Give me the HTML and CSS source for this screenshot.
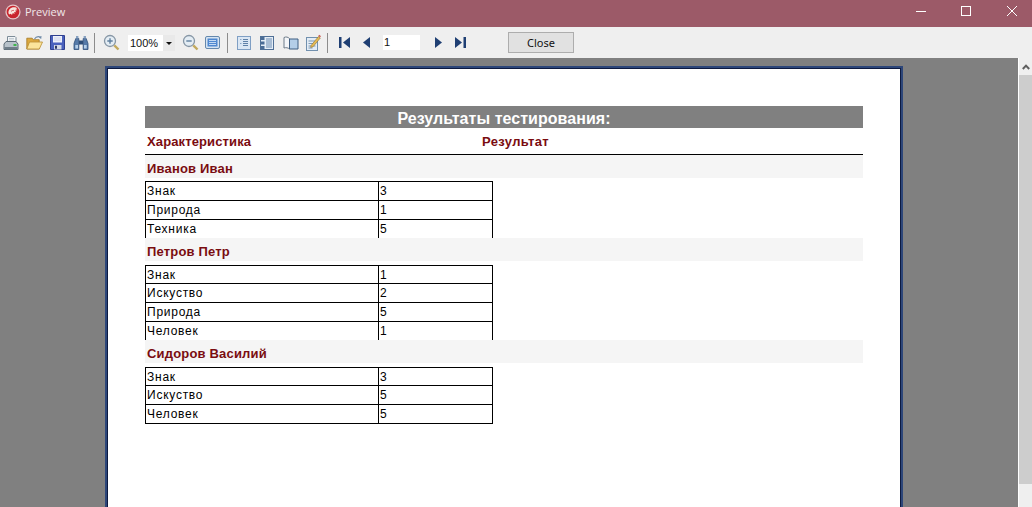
FILE: index.html
```html
<!DOCTYPE html>
<html lang="ru">
<head>
<meta charset="utf-8">
<title>Preview</title>
<link rel="stylesheet" href="styles.css">
</head>
<body>
<div class="window">
  <header class="titlebar">
    <svg class="app-icon" width="16" height="16" viewBox="0 0 16 16"><circle cx="8" cy="8" r="7.6" fill="#e6c4c6"/><circle cx="8" cy="8" r="6.3" fill="#c9232c"/><path d="M3.500 9.500C3 6 5.500 3.300 9 3.300c1.500 0 2.600.5 3.400 1.200l-2 .6 2.300 1-2.700.6 1.400 1.600-2.200-.2.400 2-1.800-1-.8 2-1.200-1.400-1.300.9z" fill="#f6e4dc"/><path d="M6 7.500c1-1 2-1.300 3-1" stroke="#c9232c" fill="none" stroke-width=".7"/></svg>
    <span class="app-title">Preview</span>
    <div class="win-controls">
      <svg class="win-btn win-min" width="10" height="10" viewBox="0 0 10 10"><path d="M0 5.500h10" stroke="#fff" fill="none"/></svg>
      <svg class="win-btn win-max" width="10" height="10" viewBox="0 0 10 10"><rect x=".5" y=".5" width="9" height="9" stroke="#fff" fill="none"/></svg>
      <svg class="win-btn" width="10" height="10" viewBox="0 0 10 10"><path d="M0 0l10 10M10 0L0 10" stroke="#fff" fill="none"/></svg>
    </div>
  </header>
  <nav class="toolbar">
    <svg class="tool" width="16" height="16" viewBox="0 0 16 16"><path d="M4.500 1.500h7.500l1 1V7H4.500z" fill="#f2f5f7" stroke="#7d8c98"/><path d="M6 3.500h5M6 5h5" stroke="#b9c4cc" stroke-width=".8"/><path d="M1 9l2-2.500h10L15 9v5.500H1z" fill="#b8c2ca" stroke="#5c6a75"/><path d="M1.500 12h13v2.500h-13z" fill="#6f7d88"/><path d="M10.500 9h3v2h-3z" fill="#3fb54c"/></svg>
    <svg class="tool g7" width="17" height="16" viewBox="0 0 17 16"><path d="M.8 5V3.200h5.400l1 1.500h6V14H.8z" fill="#dca93f" stroke="#a4771f" stroke-width=".8"/><path d="M.8 14l2.700-7h13l-3.200 7z" fill="#fbe59b" stroke="#b98e33" stroke-width=".8"/><path d="M8.500 4c1.300-2.300 3.600-2.800 6-2l-.8.800" fill="none" stroke="#6e8aa8" stroke-width="1.100"/><path d="M15.500 1l-.3 3-2.200-1.500z" fill="#6e8aa8"/></svg>
    <svg class="tool g7" width="15" height="15" viewBox="0 0 15 15"><path d="M.5.500h14v14H.5z" fill="#4a61bd" stroke="#2f3f8f"/><path d="M3 1h9v6.500H3z" fill="#eef1fa"/><path d="M4 3h7M4 5h7" stroke="#c4cce6" stroke-width=".8"/><path d="M4 10h7.500v4.500H4z" fill="#d5dae6"/><path d="M5 10.800h2v3H5z" fill="#2b3768"/></svg>
    <svg class="tool g8" width="16" height="16" viewBox="0 0 16 16"><path d="M1 14.500V8.500l1.800-5h3v11zM15 14.500V8.500l-1.800-5h-3v11z" fill="#567aa8" stroke="#2f4e78" stroke-width=".8"/><path d="M6 5.500h4v4H6z" fill="#2f4e78"/><path d="M2.300 10h2.700v3.500H2.300zM11 10h2.700v3.500H11z" fill="#b7d0ea"/><path d="M3 1h2.400v2.500H3zM10.600 1H13v2.500h-2.400z" fill="#86a0c0"/></svg>
    <span class="sep g5"></span>
    <svg class="tool g8" width="17" height="17" viewBox="0 0 17 17"><circle cx="7" cy="7" r="5.500" fill="#e4edf4" stroke="#8696a5" stroke-width="1.300"/><path d="M4.300 7h5.400M7 4.300v5.400" stroke="#5f7f9e" stroke-width="1.400"/><path d="M11.300 11.300l4.200 4.200" stroke="#c2a95d" stroke-width="2.400"/></svg>
    <div class="zoom-select g8"><span class="zoom-value">100%</span><span class="zoom-arrow"></span></div>
    <svg class="tool g7" width="17" height="17" viewBox="0 0 17 17"><circle cx="7" cy="7" r="5.500" fill="#e4edf4" stroke="#8696a5" stroke-width="1.300"/><path d="M4.300 7h5.400" stroke="#5f7f9e" stroke-width="1.400"/><path d="M11.300 11.300l4.200 4.200" stroke="#c2a95d" stroke-width="2.400"/></svg>
    <svg class="tool g6" width="15" height="13" viewBox="0 0 15 13"><rect x=".5" y=".5" width="14" height="12" rx="1.500" fill="#d6e4f2" stroke="#6488ad"/><rect x="2.500" y="2.500" width="10" height="8" fill="#4f88d0"/><path d="M4 4.500h7M4 6.500h7M4 8.500h7" stroke="#c3daf3"/></svg>
    <span class="sep g7"></span>
    <svg class="tool g9" width="14" height="14" viewBox="0 0 14 14"><rect x=".5" y=".5" width="13" height="13" fill="#dbe7f4" stroke="#7f9fc4"/><path d="M6 3.500h5M6 5.500h5M6 7.500h5M6 9.500h5" stroke="#5f81a8"/><path d="M3 3.500h1.500M3 7.500h1.500" stroke="#8aa6c6"/></svg>
    <svg class="tool g9" width="14" height="14" viewBox="0 0 14 14"><rect x=".5" y=".5" width="13" height="13" fill="#e4edf6" stroke="#4f6f96"/><path d="M1 1h3.500v3H1zM1 5.500h3.500v3H1zM1 10h3.500v3H1z" fill="#4a6c96"/><path d="M6 3h6M6 5h6M6 7h6M6 9h6M6 11h6" stroke="#6c8cb2"/></svg>
    <svg class="tool g9" width="16" height="14" viewBox="0 0 16 14"><path d="M1 1.500C3 .5 5 1 6.500 2.500V13c-1.500-1.300-3.500-1.700-5.500-1z" fill="#f3f5f8" stroke="#6c7a88"/><path d="M6.500 3h8.500v10H6.500z" fill="#b4cee8" stroke="#3f5f82"/></svg>
    <svg class="tool g7" width="15" height="17" viewBox="0 0 15 17"><rect x=".5" y="3.500" width="11" height="13" fill="#e3ecf5" stroke="#7190ae"/><path d="M2.500 7h7M2.500 9.500h7M2.500 12h7M2.500 14h4" stroke="#7190ae" stroke-width=".9"/><path d="M5 11.500L12.500 2.500l1.800 1.500L7 12.800l-2.300.6z" fill="#e6bb52" stroke="#8f7030" stroke-width=".6"/><path d="M12.800 1.300l1.700 1.500" stroke="#c95550" stroke-width="1.500"/></svg>
    <span class="sep g6"></span>
    <svg class="tool g11" width="11" height="11" viewBox="0 0 11 11"><path d="M0 0h2.500v11H0zM11 0v11L4 5.500z" fill="#1f3f73"/></svg>
    <svg class="tool g13" width="7" height="11" viewBox="0 0 7 11"><path d="M7 0v11L0 5.500z" fill="#1f3f73"/></svg>
    <span class="page-input g13">1</span>
    <svg class="tool g15" width="7" height="11" viewBox="0 0 7 11"><path d="M0 0v11l7-5.500z" fill="#1f3f73"/></svg>
    <svg class="tool g13" width="11" height="11" viewBox="0 0 11 11"><path d="M0 0v11l7-5.500zM8.500 0H11v11H8.500z" fill="#1f3f73"/></svg>
    <button class="close-btn" type="button">Close</button>
  </nav>
  <div class="workspace">
    <main class="viewport">
      <section class="sheet">
        <h1 class="report-title">Результаты тестирования:</h1>
        <div class="columns"><span class="col-name">Характеристика</span><span class="col-result">Результат</span></div>

        <h2 class="person">Иванов Иван</h2>
        <div class="grid first-grid">
          <div class="row"><span class="c1">Знак</span><span class="c2">3</span></div>
          <div class="row"><span class="c1">Природа</span><span class="c2">1</span></div>
          <div class="row"><span class="c1">Техника</span><span class="c2">5</span></div>
        </div>

        <h2 class="person">Петров Петр</h2>
        <div class="grid second-grid">
          <div class="row"><span class="c1">Знак</span><span class="c2">1</span></div>
          <div class="row"><span class="c1">Искуство</span><span class="c2">2</span></div>
          <div class="row"><span class="c1">Природа</span><span class="c2">5</span></div>
          <div class="row"><span class="c1">Человек</span><span class="c2">1</span></div>
        </div>

        <h2 class="person">Сидоров Василий</h2>
        <div class="grid third-grid">
          <div class="row"><span class="c1">Знак</span><span class="c2">3</span></div>
          <div class="row"><span class="c1">Искуство</span><span class="c2">5</span></div>
          <div class="row"><span class="c1">Человек</span><span class="c2">5</span></div>
        </div>
      </section>
    </main>
    <aside class="scrollbar">
      <span class="scroll-up"><svg width="8" height="6" viewBox="0 0 8 6"><path d="M.8 5L4 1.600 7.200 5" fill="none" stroke="#5f5f5f" stroke-width="2"/></svg></span>
      <span class="scroll-thumb"></span>
    </aside>
  </div>
</div>
</body>
</html>
```
FILE: styles.css
```css
* { box-sizing: border-box; }
html, body { margin: 0; height: 100%; overflow: hidden; }
body { font-family: "Liberation Sans", Arial, sans-serif; background: #808080; }
.window { width: 1032px; height: 507px; display: flex; flex-direction: column; overflow: hidden; }

.titlebar { height: 27px; flex: none; background: #9c5a68; display: flex; align-items: flex-start; padding: 4px 15px 0 5px; }
.app-icon { flex: none; }
.app-title { margin-left: 4px; font: 11px/16px "Open Sans", "Liberation Sans", sans-serif; color: #f2e7e9; }
.win-controls { margin-left: auto; display: flex; padding-top: 2px; }
.win-btn { display: block; flex: none; }
.win-min { margin-right: 35px; }
.win-max { margin-right: 36px; }

.toolbar { height: 31px; flex: none; background: #efefef; display: flex; align-items: center; padding-left: 3px; }
.tool { flex: none; }
.g5 { margin-left: 5px; }
.g6 { margin-left: 6px; }
.g7 { margin-left: 7px; }
.g8 { margin-left: 8px; }
.g9 { margin-left: 9px; }
.g11 { margin-left: 11px; }
.g13 { margin-left: 13px; }
.g15 { margin-left: 15px; }
.sep { width: 1px; height: 20px; background: #8c8c8c; flex: none; }
.zoom-select { width: 47px; height: 16px; background: #fff; display: flex; flex: none; font-size: 11px; line-height: 17px; padding-left: 2px; color: #111; }
.zoom-value { flex: 1; }
.zoom-arrow { width: 12px; background: #e9e9e9; position: relative; }
.zoom-arrow::after { content: ""; position: absolute; left: 3px; top: 7px; border: 3px solid transparent; border-top-color: #111; border-bottom: 0; }
.page-input { flex: none; width: 37px; height: 15px; background: #fff; font-size: 11px; line-height: 15px; padding-left: 1px; color: #111; }
.close-btn { flex: none; width: 66px; height: 21px; margin-left: 42px; background: #e1e1e1; border: 1px solid #adadad; font: 11px/17px "Noto Sans", "Liberation Sans", sans-serif; color: #111; padding: 0; }

.workspace { flex: 1; display: flex; min-height: 0; }
.viewport { flex: 1; background: #808080; padding: 8px 0 0 105px; overflow: hidden; }
.sheet { width: 798px; height: 520px; background: #fff; border: 2px solid #2d4679; box-shadow: inset 0 0 0 1px #0d1a40; padding: 38px 38px 0 38px; }
.scrollbar { width: 14px; flex: none; border-left: 1px solid #fff; background: #efefef; display: flex; flex-direction: column; }
.scroll-up { height: 17px; display: flex; align-items: center; justify-content: center; padding-left: 1px; }
.scroll-thumb { height: 409px; background: #cdcdcd; }

.report-title { margin: 0; height: 22px; background: #808080; color: #fff; font-size: 16px; line-height: 25px; font-weight: 700; text-align: center; letter-spacing: .05px; }
.columns { height: 27px; border-bottom: 1px solid #000; display: flex; color: #7a0c10; font-size: 13px; font-weight: 700; line-height: 27px; padding-left: 2px; letter-spacing: .12px; }
.col-name { width: 335px; }
.col-result { letter-spacing: .35px; }
.person { margin: 0; height: 23px; background: #f5f5f5; color: #7a0c10; font-size: 13px; font-weight: 700; line-height: 27px; padding-left: 2px; letter-spacing: .18px; }

.grid { width: 348px; margin-top: 4px; border-top: 1px solid #000; overflow: hidden; }
.first-grid { height: 57px; margin-top: 3px; }
.second-grid { height: 75px; }
.row { display: flex; height: 19px; border: 1px solid #000; border-top: 0; font-size: 12px; line-height: 18px; color: #000; letter-spacing: .75px; }
.second-grid .row:first-child, .third-grid .row:first-child { height: 18px; line-height: 18px; }
.c1 { width: 233px; border-right: 1px solid #000; padding-left: 1px; }
.c2 { flex: 1; padding-left: 1px; }
```
